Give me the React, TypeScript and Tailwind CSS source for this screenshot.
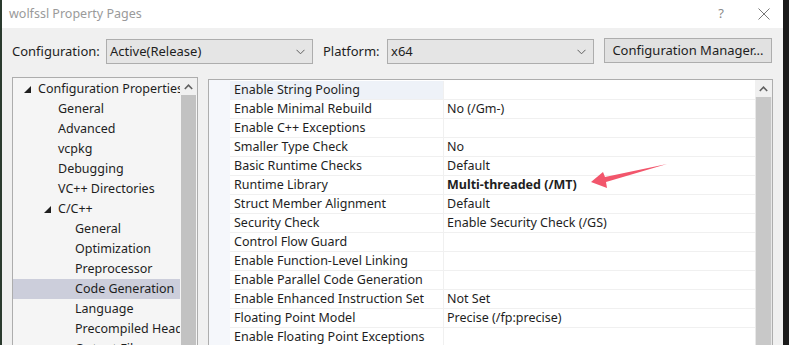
import React from 'react';

const font = { fontFamily: '"Noto Sans", "Open Sans", sans-serif' };

interface TreeItem {
  label: string;
  level: number;
  expanded?: boolean;
  selected?: boolean;
}

const tree: TreeItem[] = [
  { label: 'Configuration Properties', level: 0, expanded: true },
  { label: 'General', level: 1 },
  { label: 'Advanced', level: 1 },
  { label: 'vcpkg', level: 1 },
  { label: 'Debugging', level: 1 },
  { label: 'VC++ Directories', level: 1 },
  { label: 'C/C++', level: 1, expanded: true },
  { label: 'General', level: 2 },
  { label: 'Optimization', level: 2 },
  { label: 'Preprocessor', level: 2 },
  { label: 'Code Generation', level: 2, selected: true },
  { label: 'Language', level: 2 },
  { label: 'Precompiled Headers', level: 2 },
  { label: 'Output Files', level: 2 },
];

interface Prop {
  name: string;
  value: string;
  bold?: boolean;
}

const props: Prop[] = [
  { name: 'Enable String Pooling', value: '' },
  { name: 'Enable Minimal Rebuild', value: 'No (/Gm-)' },
  { name: 'Enable C++ Exceptions', value: '' },
  { name: 'Smaller Type Check', value: 'No' },
  { name: 'Basic Runtime Checks', value: 'Default' },
  { name: 'Runtime Library', value: 'Multi-threaded (/MT)', bold: true },
  { name: 'Struct Member Alignment', value: 'Default' },
  { name: 'Security Check', value: 'Enable Security Check (/GS)' },
  { name: 'Control Flow Guard', value: '' },
  { name: 'Enable Function-Level Linking', value: '' },
  { name: 'Enable Parallel Code Generation', value: '' },
  { name: 'Enable Enhanced Instruction Set', value: 'Not Set' },
  { name: 'Floating Point Model', value: 'Precise (/fp:precise)' },
  { name: 'Enable Floating Point Exceptions', value: '' },
];

const Chevron = () => (
  <svg width="9" height="6" viewBox="0 0 9 6" className="shrink-0">
    <path d="M0.5 0.8 L4.5 4.8 L8.5 0.8" fill="none" stroke="#606060" strokeWidth="1" />
  </svg>
);

const UpArrow = () => (
  <svg width="9" height="6" viewBox="0 0 9 6">
    <path d="M0.8 5 L4.5 1.2 L8.2 5" fill="none" stroke="#606060" strokeWidth="1.6" />
  </svg>
);

const Triangle = () => (
  <svg width="7" height="7" viewBox="0 0 7 7" className="shrink-0">
    <path d="M7 0 L7 7 L0 7 Z" fill="#1e1e1e" />
  </svg>
);

const Dropdown = ({ value, width }: { value: string; width: string }) => (
  <div className={`${width} h-[25px] flex items-center justify-between bg-[#e5e5e5] border border-[#adadad] pl-[3px] pr-[7px] text-[13px] text-[#1e1e1e]`}>
    <span>{value}</span>
    <Chevron />
  </div>
);

export default function App() {
  return (
    <div className="w-[789px] h-[345px] overflow-hidden flex bg-[#1b1b1b]" style={font}>
      <div className="w-[2px] bg-[#2a3a2e]" />
      <div className="w-[781px] flex flex-col bg-[#f0f0f0] relative">
        {/* title bar */}
        <div className="h-[28px] bg-white flex items-center justify-between pl-[7px] pr-[13px] shrink-0">
          <span className="text-[12.5px] text-[#9a9a9a]">wolfssl Property Pages</span>
          <div className="flex items-center gap-[34px] text-[#8a8a8a]">
            <span className="text-[13px]">?</span>
            <svg width="12" height="12" viewBox="0 0 12 12">
              <path d="M0.5 0.5 L11.5 11.5 M11.5 0.5 L0.5 11.5" stroke="#777" strokeWidth="1" />
            </svg>
          </div>
        </div>

        {/* config row */}
        <div className="flex items-center pl-[10px] pt-[11px] text-[13px] text-[#1e1e1e]">
          <span className="w-[94px]">Configuration:</span>
          <Dropdown value="Active(Release)" width="w-[207px]" />
          <span className="ml-[10px] w-[64px]">Platform:</span>
          <Dropdown value="x64" width="w-[207px]" />
          <div className="ml-[10px] w-[168px] h-[25px] -mt-[2px] flex items-center justify-center bg-[#e1e1e1] border border-[#adadad]">
            Configuration Manager...
          </div>
        </div>

        {/* panels */}
        <div className="flex flex-1 pl-[10px] pt-[13px] gap-[10px] min-h-0">
          {/* tree */}
          <div className="w-[186px] border border-[#adadad] border-b-0 bg-[#f5f5f5] flex min-h-0">
            <div className="flex-1 pt-[1px] overflow-hidden">
              {tree.map((t, i) => (
                <div
                  key={i}
                  className={`h-[20px] flex items-center whitespace-nowrap text-[12.5px] text-[#1e1e1e] ${t.selected ? 'bg-[#cccedb]' : ''}`}
                >
                  {t.level === 0 && (
                    <div className="flex items-center pl-[11px]">
                      <Triangle />
                      <span className="ml-[7px]">{t.label}</span>
                    </div>
                  )}
                  {t.level === 1 && t.expanded && (
                    <div className="flex items-center pl-[31px]">
                      <Triangle />
                      <span className="ml-[7px]">{t.label}</span>
                    </div>
                  )}
                  {t.level === 1 && !t.expanded && <span className="pl-[45px]">{t.label}</span>}
                  {t.level === 2 && <span className="pl-[62px]">{t.label}</span>}
                </div>
              ))}
            </div>
            <div className="w-[17px] flex flex-col shrink-0">
              <div className="h-[17px] flex items-center justify-center bg-[#f0f0f0]">
                <UpArrow />
              </div>
              <div className="flex-1 bg-[#c2c2c2] mx-[1px]" />
            </div>
          </div>

          {/* property grid */}
          <div className="w-[567px] mt-[2px] border border-[#adadad] border-b-0 bg-white flex min-h-0">
            <div className="flex-1 flex">
              <div className="w-[21px] bg-[#f5f7fb] shrink-0" />
              <div className="flex-1 pt-[1px]">
                {props.map((p, i) => (
                  <div key={i} className="h-[19px] flex border-b border-[#f0f0f0] text-[12.5px] text-[#1e1e1e]">
                    <div className={`w-[214px] pl-[4px] flex items-center whitespace-nowrap border-r border-[#f0f0f0] ${i === 0 ? 'bg-[#eef2f8]' : ''}`}>
                      {p.name}
                    </div>
                    <div className={`flex-1 pl-[3px] flex items-center whitespace-nowrap ${p.bold ? 'font-bold' : ''}`}>
                      {p.value}
                    </div>
                  </div>
                ))}
              </div>
            </div>
            <div className="w-[17px] flex flex-col shrink-0 bg-[#e8e8e8]">
              <div className="h-[17px] flex items-center justify-center bg-[#f0f0f0]">
                <UpArrow />
              </div>
              <div className="flex-1 bg-[#c8c8c8] mx-[1px]" />
            </div>
          </div>
          <div className="flex-1" />
        </div>

        {/* annotation arrow */}
        <svg className="absolute left-0 top-0 pointer-events-none" width="781" height="345" viewBox="2 0 781 345">
          <polygon points="591,182 603,172 605,177 667,164 606,182 607,188" fill="#f2566c" />
        </svg>
      </div>
      <div className="w-[6px] bg-[#1b1b1b]" />
    </div>
  );
}
